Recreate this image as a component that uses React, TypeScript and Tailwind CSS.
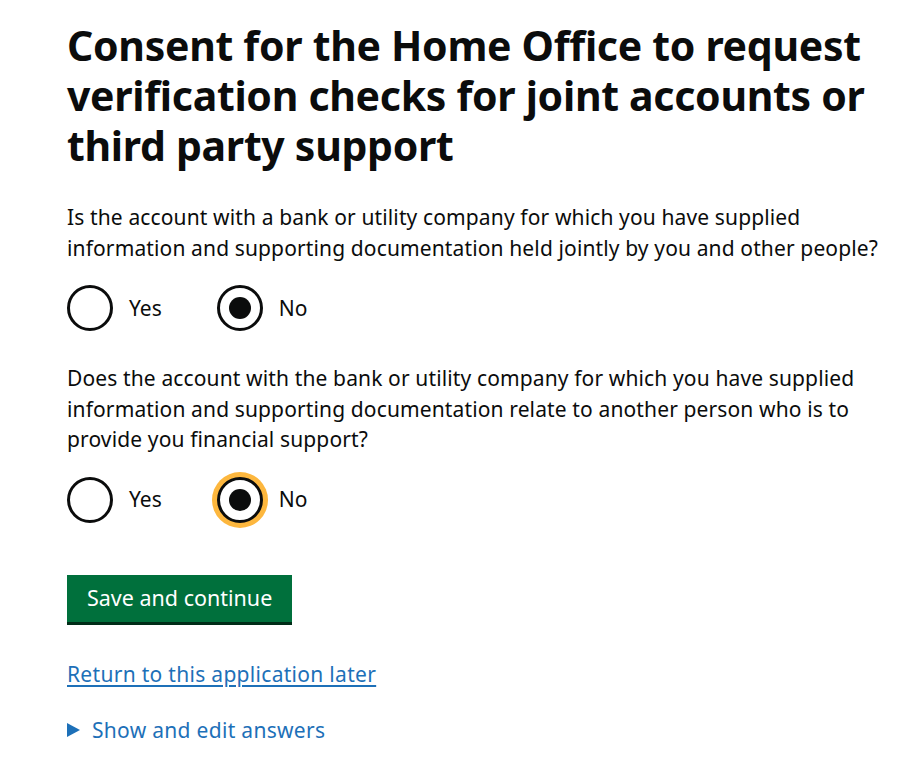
import React from 'react';

type RadioProps = {
  label: string;
  checked?: boolean;
  focused?: boolean;
};

const Radio: React.FC<RadioProps> = ({ label, checked, focused }) => {
  return (
    <label className="flex items-center">
      <span
        className={`relative flex h-[46px] w-[46px] items-center justify-center rounded-full border-[3px] border-[#0b0c0c] bg-white ${
          focused ? 'shadow-[0_0_0_5px_#fdb73e]' : ''
        }`}
      >
        {checked && <span className="h-[22px] w-[22px] rounded-full bg-[#0b0c0c]" />}
      </span>
      <span className="pl-4 pr-[55px] text-[21px] leading-[31px] text-[#0b0c0c]">{label}</span>
    </label>
  );
};

const Question: React.FC<{ text: string; focusNo?: boolean }> = ({ text, focusNo }) => {
  return (
    <div>
      <p className="text-[21px] leading-[30.5px] tracking-[0.13px] text-[#0b0c0c]">{text}</p>
      <div className="mt-[22px] flex">
        <Radio label="Yes" />
        <Radio label="No" checked focused={focusNo} />
      </div>
    </div>
  );
};

const App: React.FC = () => {
  return (
    <main
      className="min-h-[769px] bg-white pl-[67px] pr-6 pt-[20px]"
      style={{ fontFamily: '"Noto Sans", Arial, sans-serif' }}
    >
      <div className="w-[818px]">
        <h1 className="text-[41px] font-bold leading-[50px] tracking-[-0.3px] text-[#0b0c0c]">
          Consent for the Home Office to request verification checks for joint accounts or third party support
        </h1>

        <div className="mt-[32px]">
          <Question text="Is the account with a bank or utility company for which you have supplied information and supporting documentation held jointly by you and other people?" />
        </div>

        <div className="mt-[32px]">
          <Question
            text="Does the account with the bank or utility company for which you have supplied information and supporting documentation relate to another person who is to provide you financial support?"
            focusNo
          />
        </div>
      </div>

      <button className="mt-[52px] h-[47px] bg-[#00703c] px-[20px] text-[21.5px] text-white shadow-[0_3px_0_#002d18]">
        Save and continue
      </button>

      <div className="mt-[37px]">
        <a
          href="#"
          className="text-[21px] leading-[30px] tracking-[0.3px] text-[#1d70b8] underline underline-offset-[3px]"
        >
          Return to this application later
        </a>
      </div>

      <div className="mt-[26px] flex items-center text-[21px] leading-[30px] tracking-[0.3px] text-[#1d70b8]">
        <svg width="13" height="14" viewBox="0 0 13 14" className="mr-[12px]">
          <path d="M0 0 L13 7 L0 14 Z" fill="#1d70b8" />
        </svg>
        Show and edit answers
      </div>
    </main>
  );
};

export default App;
